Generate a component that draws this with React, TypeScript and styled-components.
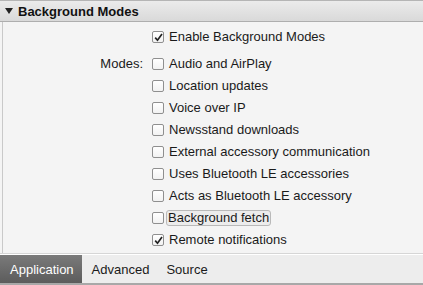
import styled, { createGlobalStyle } from 'styled-components';

const GlobalStyle = createGlobalStyle`
  html, body {
    margin: 0;
    padding: 0;
    background: #f4f4f4;
    font-family: "Liberation Sans", Arial, sans-serif;
  }
`;

const Window = styled.div`
  width: 423px;
  height: 285px;
  display: flex;
  flex-direction: column;
  overflow: hidden;
  background: #f4f4f4;
`;

const Header = styled.div`
  height: 20px;
  display: flex;
  align-items: center;
  gap: 5px;
  padding-left: 5px;
  border-top: 1px solid #b5b5b5;
  border-bottom: 1px solid #aeaeae;
  background: linear-gradient(#ebebeb, #d9d9d9);
  font-size: 13px;
  font-weight: bold;
  color: #111;
`;

const Panel = styled.div`
  flex: 1;
  margin-left: 2px;
  border-left: 1px solid #c9c9c9;
  padding-top: 4px;
  display: grid;
  grid-template-columns: 149px 1fr;
  grid-auto-rows: 22px;
  align-content: start;
`;

const Label = styled.div<{ $row: number }>`
  grid-column: 1;
  grid-row: ${(p) => p.$row};
  align-self: start;
  height: 22px;
  margin-top: 5px;
  text-align: right;
  font-size: 13px;
  color: #1a1a1a;
  line-height: 22px;
  padding-right: 9px;
`;

const Row = styled.label<{ $row: number; $extra?: number }>`
  grid-column: 2;
  grid-row: ${(p) => p.$row};
  align-self: start;
  height: 22px;
  display: flex;
  align-items: center;
  gap: 4px;
  font-size: 13px;
  color: #1a1a1a;
  margin-top: ${(p) => p.$extra ?? 0}px;
`;

const Box = styled.span`
  width: 10px;
  height: 10px;
  border: 1px solid #8f8f8f;
  border-radius: 2px;
  background: linear-gradient(#ffffff, #f2f2f2);
  display: flex;
  align-items: center;
  justify-content: center;
  flex-shrink: 0;
`;

const Text = styled.span<{ $focus?: boolean }>`
  padding: 0 1px;
  margin-left: ${(p) => (p.$focus ? -2 : 0)}px;
  border: ${(p) => (p.$focus ? '1px solid #b9b9b9' : 'none')};
  border-radius: 3px;
  background: ${(p) => (p.$focus ? '#ececec' : 'transparent')};
  line-height: 14px;
`;

const TabBar = styled.div`
  height: 28px;
  display: flex;
  border-top: 1px solid #ffffff;
  border-bottom: 2px solid #a8a8a8;
  background: #ededed;
  box-shadow: 0 -1px 0 #d6d6d6;
`;

const Tab = styled.div<{ $active?: boolean }>`
  display: flex;
  align-items: center;
  padding-left: 10px;
  padding-right: ${(p) => (p.$active ? 8 : 2)}px;
  margin-right: ${(p) => (p.$active ? 0 : 5)}px;
  font-size: 13px;
  color: ${(p) => (p.$active ? '#fff' : '#1a1a1a')};
  background: ${(p) => (p.$active ? 'linear-gradient(#7a7a7a, #5c5c5c)' : 'transparent')};
`;

function Check({ on }: { on?: boolean }) {
  return (
    <Box>
      {on && (
        <svg width="9" height="9" viewBox="0 0 9 9">
          <path d="M1.2 4.6 L3.5 7.2 L8 1" fill="none" stroke="#222" strokeWidth="1.7" />
        </svg>
      )}
    </Box>
  );
}

const modes: { name: string; on?: boolean; focus?: boolean }[] = [
  { name: 'Audio and AirPlay' },
  { name: 'Location updates' },
  { name: 'Voice over IP' },
  { name: 'Newsstand downloads' },
  { name: 'External accessory communication' },
  { name: 'Uses Bluetooth LE accessories' },
  { name: 'Acts as Bluetooth LE accessory' },
  { name: 'Background fetch', focus: true },
  { name: 'Remote notifications', on: true },
];

export default function App() {
  return (
    <>
      <GlobalStyle />
      <Window>
        <Header>
          <svg width="8" height="7" viewBox="0 0 8 7">
            <path d="M0 0 H8 L4 6 Z" fill="#222" />
          </svg>
          Background Modes
        </Header>
        <Panel>
          <Row $row={1}>
            <Check on />
            <Text>Enable Background Modes</Text>
          </Row>
          <Label $row={2}>Modes:</Label>
          {modes.map((m, i) => (
            <Row key={m.name} $row={i + 2} $extra={5}>
              <Check on={m.on} />
              <Text $focus={m.focus}>{m.name}</Text>
            </Row>
          ))}
        </Panel>
        <TabBar>
          <Tab $active>Application</Tab>
          <Tab>Advanced</Tab>
          <Tab>Source</Tab>
        </TabBar>
      </Window>
    </>
  );
}
